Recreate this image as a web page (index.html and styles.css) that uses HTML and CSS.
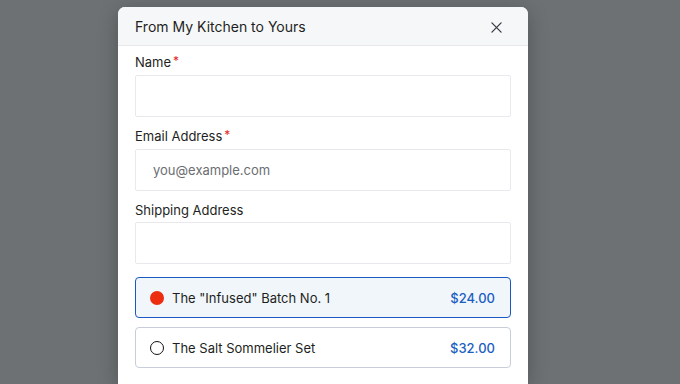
FILE: index.html
```html
<!DOCTYPE html>
<html>
<head>
<meta charset="utf-8">
<link rel="stylesheet" href="styles.css">
</head>
<body>
<div class="overlay">
  <div class="modal">
    <div class="modal-header">
      <span class="title">From My Kitchen to Yours</span>
      <svg class="close" width="11" height="11" viewBox="0 0 12 12"><path d="M1 1L11 11M11 1L1 11" stroke="#3a3d42" stroke-width="1.4" stroke-linecap="round"/></svg>
    </div>
    <div class="modal-body">
      <div class="field">
        <label class="label">Name<span class="req">*</span></label>
        <div class="input"></div>
      </div>
      <div class="field">
        <label class="label">Email Address<span class="req">*</span></label>
        <div class="input"><span class="placeholder">you@example.com</span></div>
      </div>
      <div class="field">
        <label class="label">Shipping Address</label>
        <div class="input"></div>
      </div>
      <div class="options">
        <div class="option selected">
          <span class="radio filled"></span>
          <span class="opt-name">The "Infused" Batch No. 1</span>
          <span class="price">$24.00</span>
        </div>
        <div class="option">
          <span class="radio"></span>
          <span class="opt-name">The Salt Sommelier Set</span>
          <span class="price">$32.00</span>
        </div>
      </div>
    </div>
  </div>
</div>
</body>
</html>
```
FILE: styles.css
```css
* { box-sizing: border-box; }
html, body { margin: 0; padding: 0; }
body {
  width: 680px;
  height: 384px;
  overflow: hidden;
  background: #6d7173;
  font-family: Inter, "Liberation Sans", sans-serif;
  color: #1d1f22;
}
.overlay {
  display: flex;
  padding: 7px 0 0 118px;
}
.modal {
  width: 410px;
  height: 377px;
  background: #fff;
  border-radius: 7px 7px 0 0;
  box-shadow: 0 4px 20px rgba(0,0,0,0.25);
  overflow: hidden;
}
.modal-header {
  height: 39px;
  background: #f6f7f9;
  border-bottom: 1px solid #e6e8eb;
  display: flex;
  align-items: center;
  justify-content: space-between;
  padding: 0 26px 0 17px;
}
.title {
  font-size: 14px;
  color: #1d1f22;
}
.close { display: block; margin-top: 2px; }
.modal-body {
  padding: 5px 17px 0 17px;
}
.field { margin-bottom: 8px; }
.label {
  display: block;
  font-size: 13px;
  line-height: 18px;
  padding-top: 2px;
  margin-bottom: 3px;
}
.req { color: #e5261b; margin-left: 2px; font-size: 12px; position: relative; top: -2px; }
.input {
  height: 42px;
  border: 1px solid #e7e9ec;
  border-radius: 2px;
  display: flex;
  align-items: center;
  padding-left: 17px;
}
.placeholder {
  color: #6b6e72;
  font-size: 13px;
}
.options {
  padding-top: 5px;
  display: flex;
  flex-direction: column;
  gap: 9px;
}
.option {
  height: 41px;
  border: 1.5px solid #c7ced8;
  border-radius: 4px;
  display: flex;
  align-items: center;
  padding: 0 15px 0 14px;
  font-size: 13px;
}
.option.selected {
  border-color: #1a58c2;
  background: #f1f6fb;
}
.radio {
  width: 14px;
  height: 14px;
  border-radius: 50%;
  border: 1.5px solid #111;
  margin-right: 8px;
  flex: none;
}
.radio.filled {
  background: #ec2d10;
  border: none;
}
.opt-name { flex: 1; color: #1d1f22; }
.price { color: #1b5fbf; font-weight: 500; }
```
